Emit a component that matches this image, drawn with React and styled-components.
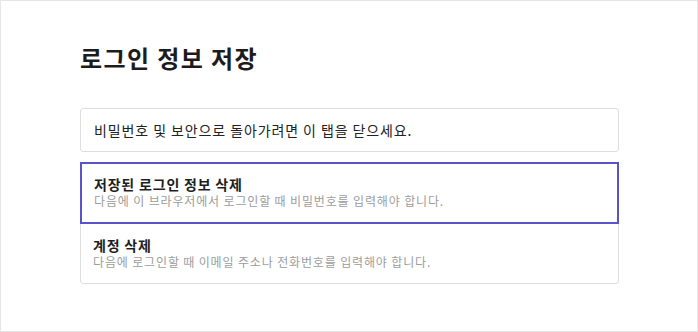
import React from 'react';
import styled, { createGlobalStyle } from 'styled-components';

const GlobalStyle = createGlobalStyle`
    html, body {
        margin: 0;
        padding: 0;
        background: #fff;
    }
    * {
        box-sizing: border-box;
    }
`;

const Page = styled.div`
    width: 698px;
    height: 332px;
    border: 1px solid #e6e6e6;
    background: #fff;
    padding: 41px 0 0 79px;
    font-family: "Noto Sans CJK KR", "Noto Sans", sans-serif;
    color: #222;
`;

const Title = styled.h1`
    margin: 0 0 34px 0;
    font-size: 24px;
    line-height: 32px;
    font-weight: 700;
    letter-spacing: 1.4px;
    color: #1c1c1c;
`;

const Notice = styled.div`
    width: 539px;
    height: 44px;
    border: 1px solid #dedede;
    border-radius: 3px;
    padding: 0 13px;
    font-size: 14px;
    line-height: 42px;
    letter-spacing: 0.9px;
    color: #222;
`;

const List = styled.div`
    width: 539px;
    margin-top: 10px;
    display: flex;
    flex-direction: column;
    border: 1px solid #dedede;
    border-radius: 3px;
`;

const Item = styled.div`
    padding: 12px 12px 13px;
    cursor: pointer;
    ${({ $selected }) => $selected && `
        margin: -1px -1px 0 -1px;
        border: 2px solid #5b53c9;
        padding: 11px 12px 13px;
    `}
`;

const ItemTitle = styled.div`
    font-size: 14px;
    line-height: 18px;
    font-weight: 700;
    letter-spacing: 0.8px;
    color: #1e1e1e;
`;

const ItemDesc = styled.div`
    font-size: 12px;
    line-height: 16px;
    letter-spacing: 0.85px;
    color: #9c9c9c;
`;

const items = [
    {
        id: 'saved',
        title: '저장된 로그인 정보 삭제',
        desc: '다음에 이 브라우저에서 로그인할 때 비밀번호를 입력해야 합니다.',
    },
    {
        id: 'account',
        title: '계정 삭제',
        desc: '다음에 로그인할 때 이메일 주소나 전화번호를 입력해야 합니다.',
    },
];

export default function App() {
    const selected = 'saved';

    return (
        <>
            <GlobalStyle />
            <Page>
                <Title>로그인 정보 저장</Title>
                <Notice>비밀번호 및 보안으로 돌아가려면 이 탭을 닫으세요.</Notice>
                <List>
                    {items.map(item => (
                        <Item key={item.id} $selected={item.id === selected}>
                            <ItemTitle>{item.title}</ItemTitle>
                            <ItemDesc>{item.desc}</ItemDesc>
                        </Item>
                    ))}
                </List>
            </Page>
        </>
    );
}
